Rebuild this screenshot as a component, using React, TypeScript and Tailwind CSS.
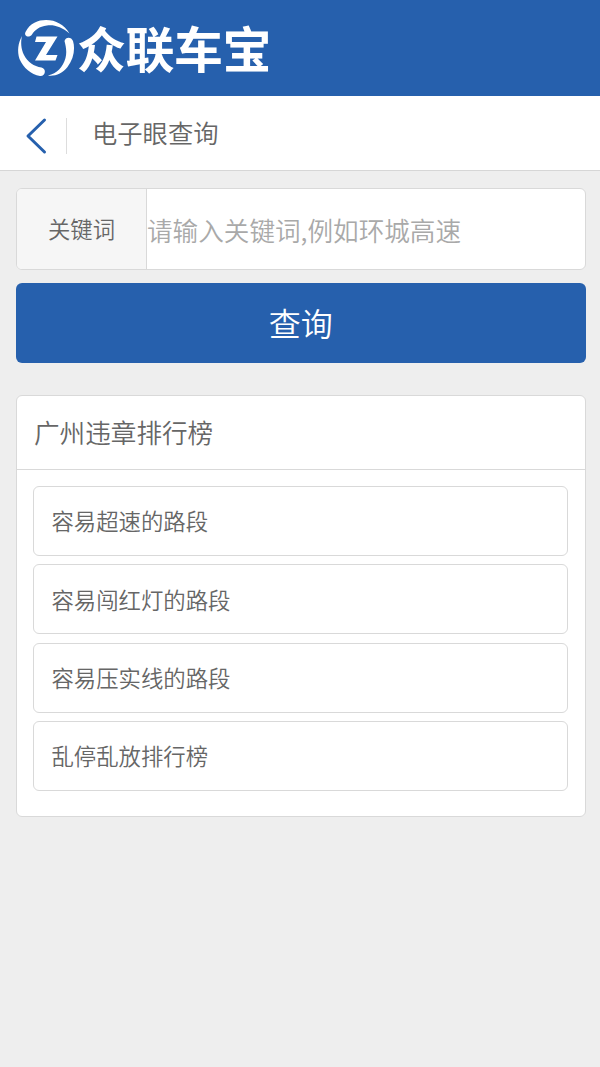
import React, { useState } from 'react';

const rankings = [
  { id: 1, name: '容易超速的路段' },
  { id: 2, name: '容易闯红灯的路段' },
  { id: 3, name: '容易压实线的路段' },
  { id: 4, name: '乱停乱放排行榜' },
];

const LogoMark: React.FC = () => (
  <svg width="58" height="58" viewBox="17 18 58 58" fill="#fff" className="shrink-0">
    <path d="M25.500 31C30 22 38 19 46 19C56 19 64 23.500 69.500 32.500C62 26 54 23.500 47 24.500C39 25.500 35 29 32 33.500C29 37.500 23.500 35 25.500 31Z" />
    <path d="M64.500 40C65.500 35.500 71.500 35.500 73 40C75.500 48 73.500 58 67.500 66C62.500 72.500 55 75.500 48 74.500C57 72.500 63 66 65.500 57C67 51 66 46 64.500 40Z" />
    <path d="M22 35C18 42 17 50 19.500 58C23.500 67 31 73.500 40 75C46 75.500 46.500 67.500 41.500 66.500C34 65.500 27.500 61 24 54C21 48 20.500 41 22 35Z" />
    <path d="M36.500 35.500H57.500L46 54H57.500L55.500 59.500H35L46 41H35Z" />
  </svg>
);

const ElectronicEyePage: React.FC = () => {
  const [keyword, setKeyword] = useState('');

  return (
    <div className="min-h-screen bg-[#eeeeee] text-[#666] font-['Noto_Sans_CJK_SC',sans-serif] font-[350]">
      {/* Logo */}
      <header className="flex h-24 items-center bg-[#2660ad] pl-[17px] text-white">
        <LogoMark />
        <span className="ml-0.5 -mt-1 text-[49px] leading-none font-bold tracking-[-0.5px]">众联车宝</span>
      </header>

      {/* Title bar */}
      <div className="flex h-[75px] items-center border-b border-[#d6d6d6] bg-white pl-6">
        <button type="button" className="mt-1.5 text-[#2660ad]">
          <svg width="24" height="38" viewBox="0 0 24 38" fill="none" stroke="currentColor" strokeWidth="3" strokeLinecap="round" strokeLinejoin="round">
            <path d="M20.500 3L4 19L20.500 35" />
          </svg>
        </button>
        <div className="ml-[18px] mt-1.5 h-9 w-px bg-[#ddd]" />
        <h1 className="ml-[25px] text-[25.3px] leading-none">电子眼查询</h1>
      </div>

      <main className="pt-[17px] pr-[14.4px] pl-4">
        {/* Search form */}
        <div className="flex h-[82px] overflow-hidden rounded-md border border-[#d9d9d9] bg-white">
          <label htmlFor="keyword" className="flex w-[130px] shrink-0 items-center justify-center border-r border-[#d9d9d9] bg-[#f6f6f6] pb-px text-[22.4px]">
            关键词
          </label>
          <input
            id="keyword"
            value={keyword}
            onChange={(e) => setKeyword(e.target.value)}
            placeholder="请输入关键词,例如环城高速"
            className="min-w-0 flex-1 pt-[3px] text-[25.6px] outline-none placeholder:text-[#a9a9a9]"
          />
        </div>
        <button type="button" className="mt-[13px] block h-20 w-full rounded-md bg-[#2660ad] pb-0.5 text-[32px] text-white">
          查询
        </button>

        {/* Ranking list */}
        <section className="mt-8 h-[422px] rounded-md border border-[#d9d9d9] bg-white">
          <h2 className="flex h-[74px] items-center border-b border-[#d9d9d9] pl-[17px] text-[25.6px]">广州违章排行榜</h2>
          <ul className="flex flex-col gap-[8.4px] px-[16.400px] pt-4">
            {rankings.map((item) => (
              <li key={item.id} className="flex h-[70px] items-center rounded-md border border-[#d9d9d9] pl-[17px] text-[22.4px]">
                {item.name}
              </li>
            ))}
          </ul>
        </section>
      </main>
    </div>
  );
};

export default ElectronicEyePage;
